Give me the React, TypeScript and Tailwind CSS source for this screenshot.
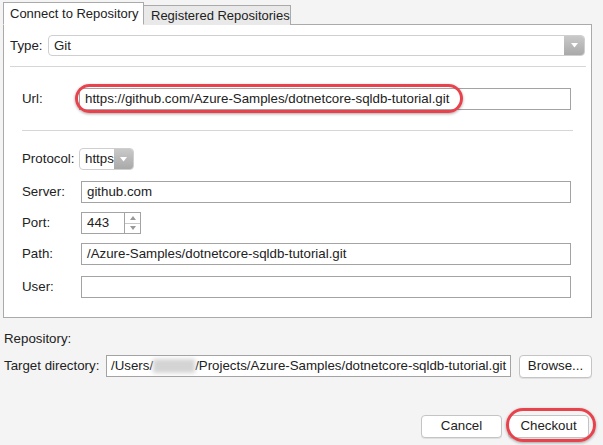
const font = { fontFamily: '"Liberation Sans", Arial, sans-serif' };

function Field({ value, className = '' }: { value: string; className?: string }) {
  return (
    <div className={`h-[22px] border border-[#a3a3a3] bg-white pl-[5px] flex items-center text-[13.3px] text-[#222] whitespace-nowrap overflow-hidden ${className}`}>
      {value}
    </div>
  );
}

function Arrow({ className = '' }: { className?: string }) {
  return (
    <div className={`flex items-center justify-center bg-gradient-to-b from-[#c9c9c9] to-[#a9a9a9] ${className}`}>
      <svg width="7" height="5" viewBox="0 0 7 5">
        <path d="M0 0 L7 0 L3.5 4.5 Z" fill="#fff" />
      </svg>
    </div>
  );
}

function Button({ label, className = '' }: { label: string; className?: string }) {
  return (
    <div className={`h-[23px] rounded-[4px] border border-[#c4c4c4] bg-white shadow-[0_1px_0_rgba(0,0,0,0.08)] flex items-center justify-center text-[13.3px] text-[#222] ${className}`}>
      {label}
    </div>
  );
}

export default function App() {
  return (
    <div className="relative w-[603px] h-[445px] bg-[#f4f4f4] text-[#222] text-[13.3px] overflow-hidden" style={font}>
      {/* Tabs */}
      <div className="flex items-end ml-[3px] pt-[2px] relative z-10 -mb-px text-[13px] whitespace-nowrap">
        <div className="h-[23px] w-[141px] bg-white border border-[#aaa] border-b-white flex items-center pl-[6px]">
          Connect to Repository
        </div>
        <div className="h-[20px] w-[147px] bg-[#e9e9e9] border border-[#aaa] border-l-0 border-b-0 flex items-center pl-[7px]">
          Registered Repositories
        </div>
      </div>

      {/* Panel */}
      <div className="ml-[3px] w-[589px] h-[294px] border border-[#aaa] bg-white">
        <div className="flex items-center pl-[6px] pr-[6px] mt-[10px]">
          <div className="w-[38px]">Type:</div>
          <div className="flex-1 h-[21px] border border-[#cfcfcf] rounded-[4px] flex overflow-hidden">
            <div className="flex-1 flex items-center pl-[5px]">Git</div>
            <Arrow className="w-[20px]" />
          </div>
        </div>
        <div className="ml-[6px] mr-[5px] mt-[10px] h-px bg-[#d6d6d6]" />

        <div className="pl-[18px]">
          <div className="flex items-center mt-[21px]">
            <div className="w-[57px]">Url:</div>
            <Field value="https://github.com/Azure-Samples/dotnetcore-sqldb-tutorial.git" className="w-[492px]" />
          </div>
          <div className="w-[551px] mt-[20px] h-px bg-[#d6d6d6]" />

          <div className="flex items-center mt-[17px]">
            <div className="w-[57px]">Protocol:</div>
            <div className="w-[55px] h-[22px] border border-[#cfcfcf] rounded-[4px] flex overflow-hidden">
              <div className="flex-1 flex items-center pl-[5px]">https</div>
              <Arrow className="w-[20px]" />
            </div>
          </div>

          <div className="flex items-center mt-[11px]">
            <div className="w-[59px]">Server:</div>
            <Field value="github.com" className="w-[490px]" />
          </div>

          <div className="flex items-center mt-[9px]">
            <div className="w-[59px]">Port:</div>
            <Field value="443" className="w-[44px]" />
            <div className="w-[16px] h-[22px] border border-l-0 border-[#a3a3a3] flex flex-col">
              <div className="flex-1 flex items-center justify-center border-b border-[#c8c8c8]">
                <svg width="6" height="4" viewBox="0 0 6 4"><path d="M0 4 L6 4 L3 0 Z" fill="#999" /></svg>
              </div>
              <div className="flex-1 flex items-center justify-center">
                <svg width="6" height="4" viewBox="0 0 6 4"><path d="M0 0 L6 0 L3 4 Z" fill="#999" /></svg>
              </div>
            </div>
          </div>

          <div className="flex items-center mt-[9px]">
            <div className="w-[59px]">Path:</div>
            <Field value="/Azure-Samples/dotnetcore-sqldb-tutorial.git" className="w-[490px]" />
          </div>

          <div className="flex items-center mt-[11px]">
            <div className="w-[59px]">User:</div>
            <Field value="" className="w-[490px]" />
          </div>
        </div>
      </div>

      {/* Repository */}
      <div className="pl-[4px] mt-[11px]">Repository:</div>
      <div className="flex items-center pl-[4px] mt-[6px]">
        <div className="w-[102px]">Target directory:</div>
        <div className="w-[405px] h-[22px] border border-[#a3a3a3] bg-white pl-[4px] flex items-center whitespace-nowrap overflow-hidden">
          /Users/
          <span className="inline-block w-[42px] h-[14px] bg-[#d4d4d4] blur-[2px]" />
          /Projects/Azure-Samples/dotnetcore-sqldb-tutorial.git
        </div>
        <Button label="Browse..." className="ml-[8px] w-[73px]" />
      </div>

      {/* Actions */}
      <div className="flex justify-end pr-[14px] mt-[37px] gap-[6px]">
        <Button label="Cancel" className="w-[81px]" />
        <Button label="Checkout" className="w-[81px]" />
      </div>

      {/* Annotation ellipses */}
      <div className="absolute left-[75px] top-[84px] w-[388px] h-[29px] rounded-full border-[3px] border-[#e8434c] shadow-[0_1px_3px_rgba(0,0,0,0.35)]" />
      <div className="absolute left-[506px] top-[408px] w-[90px] h-[34px] rounded-full border-[3px] border-[#e8434c] shadow-[0_1px_3px_rgba(0,0,0,0.35)]" />
    </div>
  );
}
